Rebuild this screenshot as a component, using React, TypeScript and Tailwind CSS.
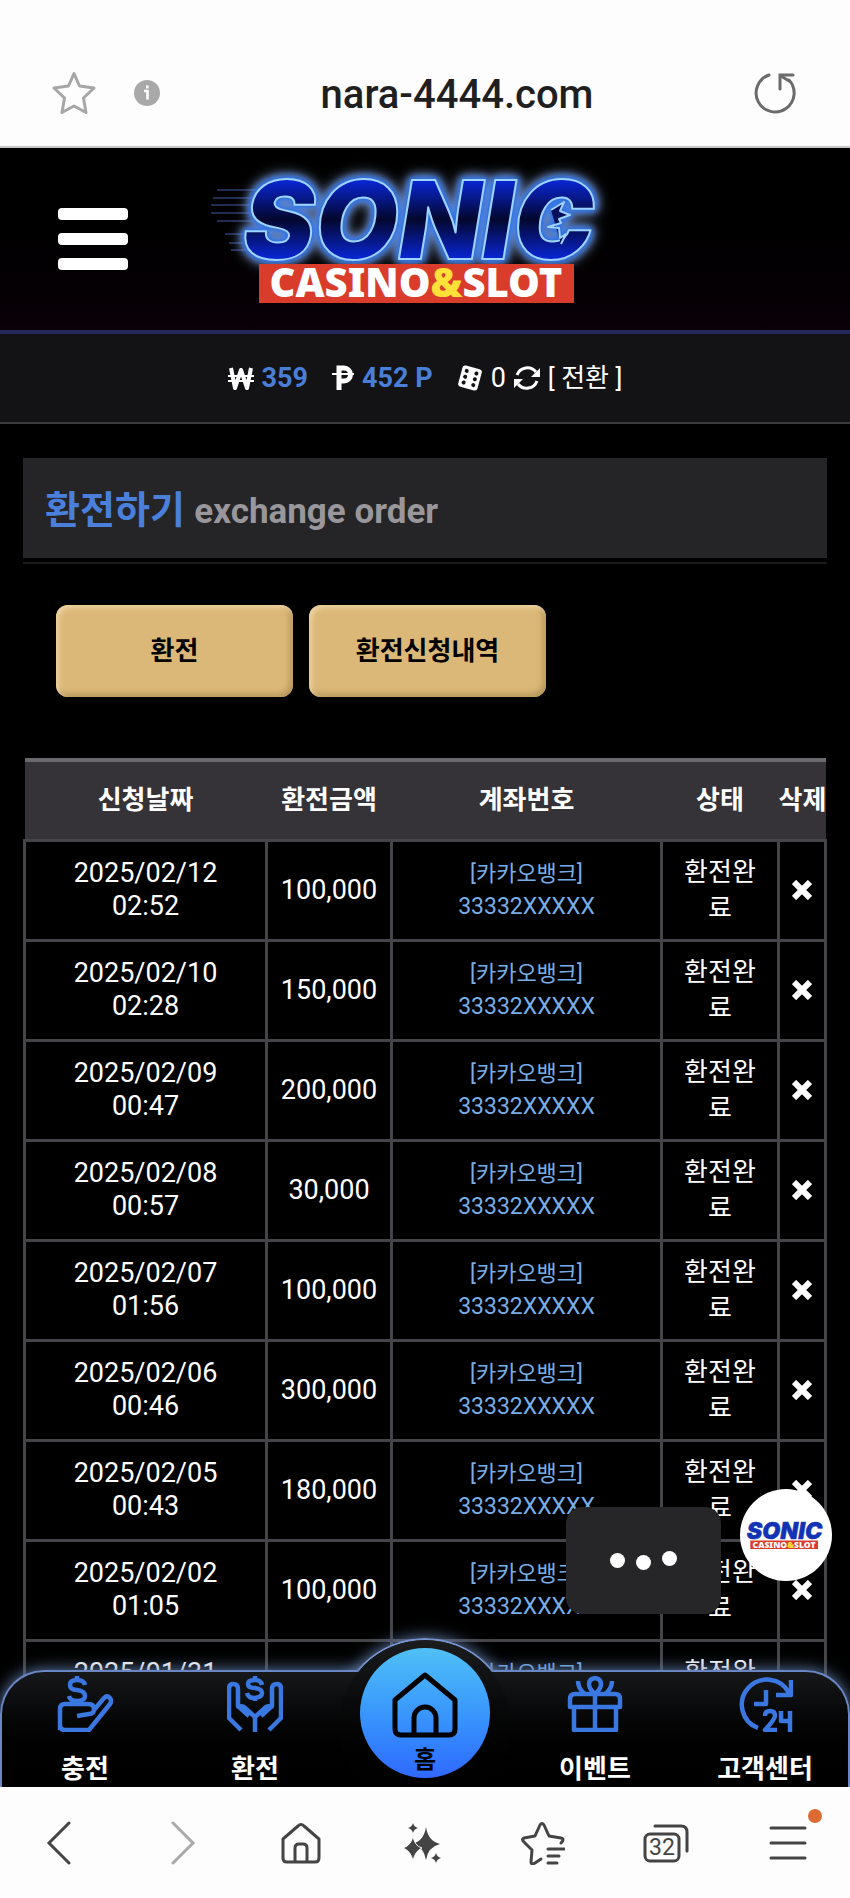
import { FC, ReactNode } from 'react';

type Order = {
	date: string;
	time: string;
	amount: string;
};

const orders: Order[] = [
	{ date: '2025/02/12', time: '02:52', amount: '100,000' },
	{ date: '2025/02/10', time: '02:28', amount: '150,000' },
	{ date: '2025/02/09', time: '00:47', amount: '200,000' },
	{ date: '2025/02/08', time: '00:57', amount: '30,000' },
	{ date: '2025/02/07', time: '01:56', amount: '100,000' },
	{ date: '2025/02/06', time: '00:46', amount: '300,000' },
	{ date: '2025/02/05', time: '00:43', amount: '180,000' },
	{ date: '2025/02/02', time: '01:05', amount: '100,000' },
	{ date: '2025/01/31', time: '00:52', amount: '' },
];

const Logo: FC<{ className: string; small?: boolean }> = ({ className, small }) => (
	<svg viewBox="0 0 400 150" className={`overflow-visible ${className}`} role="img" aria-label="SONIC CASINO & SLOT">
		{!small && (
			<>
				<defs>
					<linearGradient id="sonicFill" x1="0" y1="0" x2="0" y2="1">
						<stop offset="0.15" stopColor="#0a2bf0" />
						<stop offset="0.5" stopColor="#03072e" />
						<stop offset="0.85" stopColor="#0a2bf0" />
					</linearGradient>
				</defs>
				<path
					d="M-8 26h60M-12 34h60M-14 41h60M-14 49h60M-8 57h40M0 70h30M4 79h30M6 86h40"
					stroke="#3a4c8c"
					strokeWidth="1.5"
					opacity="0.8"
				/>
			</>
		)}
		<g
			className={
				small
					? ''
					: '[filter:drop-shadow(0_0_1px_#2c6fe0)_drop-shadow(0_0_3px_#2c6fe0)_drop-shadow(0_0_3px_#3a78e8)_drop-shadow(0_0_6px_#8fa8d8)]'
			}
			fill={small ? '#1233b4' : 'url(#sonicFill)'}
			stroke={small ? '#1233b4' : '#9ed4ff'}
			strokeWidth="2"
			strokeLinejoin="round"
		>
			<text
				x="18"
				y="95"
				fontFamily="Inter, 'Liberation Sans', sans-serif"
				fontWeight="900"
				fontStyle="italic"
				fontSize="108"
			>
				SONIC
			</text>
			{/* quills on the inside of the C */}
			{!small && <path d="M326 46l13-8-4 9 10 4-11 4 2 4-13 4 11 1 1 10 6-4-5 10" fill="#060f5c" />}
		</g>
		<path d="M34 100h315v39H34z" fill="#d93c2b" />
		<text
			x="191"
			y="133"
			textAnchor="middle"
			fontFamily="'Noto Sans', 'Open Sans', sans-serif"
			fontWeight="900"
			fontSize="40"
			fill="#fff"
		>
			CASINO<tspan fill="#ffe13a">&amp;</tspan>SLOT
		</text>
	</svg>
);

const BrowserBar = () => (
	<header className="flex h-[148px] shrink-0 items-center border-b-2 border-[#c8c8c8] bg-[#fdfdfd] px-[52px] pt-10">
		<button aria-label="Bookmark">
			<svg viewBox="0 0 44 44" className="size-11" fill="none" stroke="#a6a6a6" strokeWidth="3" strokeLinejoin="round">
				<path d="M22 2.500l5.500 12.500 14.500 2-10.500 10 2.500 14.500-12-6.500-12 6.500 2.500-14.500L2 17l14.500-2z" />
			</svg>
		</button>
		<button aria-label="Site info" className="ml-[38px]">
			<svg viewBox="0 0 26 26" className="size-[26px]">
				<circle cx="13" cy="13" r="13" fill="#a9a9a9" />
				<path d="M10 11h3.500v8.500M13.300 5.500v3" stroke="#fff" strokeWidth="2.600" fill="none" />
			</svg>
		</button>
		<span className="flex-1 pt-1 text-center text-[40px] font-medium leading-none text-[#1f1f1f]">nara-4444.com</span>
		<button aria-label="Reload">
			<svg viewBox="0 0 44 44" className="size-11" fill="none" stroke="#6b6b6b" strokeWidth="3" strokeLinecap="round">
				<path d="M15 4A19 19 0 1 0 35 9" />
				<path d="M26 18V4h13" />
				<path d="M27 5l8 5" />
			</svg>
		</button>
	</header>
);

const SiteHeader = () => (
	<div className="grid h-[186px] shrink-0 grid-cols-[1fr_auto_1fr] items-center border-b-4 border-[#24285c] bg-linear-to-b from-black to-[#0a0008] px-[58px]">
		<button aria-label="Menu" className="flex w-[70px] flex-col gap-[13px]">
			<span className="h-3 rounded-sm bg-white" />
			<span className="h-3 rounded-sm bg-white" />
			<span className="h-3 rounded-sm bg-white" />
		</button>
		<a href="#home">
			<Logo className="h-[150px] w-[400px]" />
		</a>
	</div>
);

const Balance = () => (
	<div className="flex h-[90px] shrink-0 items-center justify-center border-b-2 border-[#3c3c3e] bg-[#131215] text-[27px] text-white">
		<svg viewBox="0 0 26 24" className="mr-2 h-6 w-[26px]" fill="none" stroke="#fff">
			<path d="M3 2l4 20 6-18 6 18 4-20" strokeWidth="4" strokeLinejoin="round" />
			<path d="M0 10h26M0 15h26" strokeWidth="2" />
		</svg>
		<b className="font-bold text-[#4a7fd8]">359</b>
		<svg viewBox="0 0 22 26" className="mr-2 ml-6 h-[26px] w-[22px]" fill="none" stroke="#fff">
			<path d="M7 25V3h5a6 6 0 0 1 0 13H7" strokeWidth="5" />
			<path d="M0 9h22" strokeWidth="2" />
		</svg>
		<b className="font-bold text-[#4a7fd8]">452 P</b>
		<svg viewBox="0 0 26 26" className="mr-2 ml-6 size-[26px]">
			<g transform="rotate(15 13 13)">
				<rect x="3" y="2" width="20" height="22" rx="3" fill="#fff" />
				<g fill="#131215">
					<circle cx="8" cy="7" r="2" />
					<circle cx="8" cy="13" r="2" />
					<circle cx="8" cy="19" r="2" />
					<circle cx="18" cy="7" r="2" />
					<circle cx="18" cy="13" r="2" />
					<circle cx="18" cy="19" r="2" />
				</g>
			</g>
		</svg>
		<span>0</span>
		<svg viewBox="0 0 26 26" className="mx-2 size-[26px]" fill="none" stroke="#fff" strokeWidth="3">
			<path d="M3 10a11 11 0 0 1 19-3M23 16a11 11 0 0 1-19 3" />
			<path d="M26 3v9h-9zM0 23v-9h9z" fill="#fff" stroke="none" />
		</svg>
		<button className="text-[26px]">[ 전환 ]</button>
	</div>
);

const OrderTable = () => (
	<table className="mt-[61px] w-full table-fixed border-collapse text-center text-white">
		<colgroup>
			<col className="w-[242px]" />
			<col className="w-[125px]" />
			<col />
			<col className="w-[117px]" />
			<col className="w-[47px]" />
		</colgroup>
		<thead>
			<tr className="h-20 border-t-4 border-[#6a696d] bg-[#353337] text-[26px]">
				{['신청날짜', '환전금액', '계좌번호', '상태', '삭제'].map((title) => (
					<th key={title} className="whitespace-nowrap p-0 font-bold">
						{title}
					</th>
				))}
			</tr>
		</thead>
		<tbody>
			{orders.map((order) => (
				<tr key={order.date} className="h-[100px] text-[27px] leading-[33px] *:border-3 *:border-[#454448] *:p-0">
					<td>
						{order.date}
						<br />
						{order.time}
					</td>
					<td>{order.amount}</td>
					<td className="text-[23px] text-[#78aee8]">
						<span className="text-[22px]">[카카오뱅크]</span>
						<br />
						33332XXXXX
					</td>
					<td className="text-[26px] leading-9">
						환전완
						<br />료
					</td>
					<td>
						<button aria-label="삭제" className="block w-full">
							<svg viewBox="0 0 20 20" className="mx-auto size-5" stroke="#fff" strokeWidth="6">
								<path d="M2 2l16 16M18 2L2 18" />
							</svg>
						</button>
					</td>
				</tr>
			))}
		</tbody>
	</table>
);

const NavItem: FC<{ label: string; children: ReactNode }> = ({ label, children }) => (
	<a href={`#${label}`} className="flex flex-1 flex-col items-center justify-between pt-[6px] pb-[2px]">
		<svg viewBox="0 0 56 56" className="size-14" fill="none" stroke="#3b77e0" strokeWidth="4.500" strokeLinejoin="round">
			{children}
		</svg>
		<span className="text-[26px] font-bold leading-8 text-white">{label}</span>
	</a>
);

const BottomNav = () => (
	<nav className="absolute inset-x-0 bottom-0 h-[117px]">
		<div className="absolute -top-8 left-1/2 size-[176px] -translate-x-1/2 rounded-full border-2 border-[#7794d0] shadow-[0_0_16px_#6a86b8]" />
		<div className="absolute inset-0 rounded-t-[44px] border-2 border-b-0 border-[#6a86c4] bg-linear-to-b from-[#17181a] to-black shadow-[0_0_16px_#6480b0]" />
		<div className="absolute -top-[30px] left-1/2 h-[147px] w-[172px] -translate-x-1/2 overflow-hidden">
			<div className="size-[172px] rounded-full bg-linear-to-b from-[#1b1c1e] to-black" />
		</div>
		<div className="relative flex h-full">
			<NavItem label="충전">
				<path d="M3 54V33q0-5 5-5h23q6 0 6 5t-5 5l-12 2M37 34l10-12q3-3 6 0 2 3 0 6L32 54H8q-5 0-5-5" />
				<path d="M28 9q-1-5-8-5-7 0-7 5t7 5q8 1 8 6t-8 5q-7 0-8-5M20 0v5M20 24v5" />
			</NavItem>
			<NavItem label="환전">
				<path d="M14 54L2 42V13q0-5 4-5 5 0 5 5v17l11 10M11 33q2-4 6-2l11 10v15M42 54l12-12V13q0-5-4-5-5 0-5 5v17L34 40M45 33q-2-4-6-2L28 41" />
				<path d="M35 9q-1-5-7-5-7 0-7 4t7 4q7 1 7 5t-7 5q-7 0-8-5M28 0v5M28 21v4" />
			</NavItem>
			<a href="#home" className="relative flex flex-1 justify-center">
				<span className="absolute -top-[22px] flex size-[130px] flex-col items-center gap-[6px] rounded-full bg-linear-to-b from-[#50c0f6] to-[#3068ff] pt-6 text-black">
					<svg viewBox="0 0 66 66" className="size-[66px]" fill="none" stroke="#000" strokeWidth="5" strokeLinejoin="round">
						<path d="M3 28L33 3l30 25v29q0 6-6 6H9q-6 0-6-6z" />
						<path d="M22 62V46a11 11 0 0 1 22 0v16" />
					</svg>
					<span className="text-2xl font-bold leading-8">홈</span>
				</span>
			</a>
			<NavItem label="이벤트">
				<path d="M3 31V23q0-5 5-5h40q5 0 5 5v8zM7 31v23h42V31M28 18v36" />
				<path d="M28 18q-6-5-6-10t6-6q6 1 6 6t-6 10M11 5q0 8 7 13M45 5q0 8-7 13" />
			</NavItem>
			<NavItem label="고객센터">
				<path d="M21 52A25 25 0 1 1 52 17M54 4v15H39M29 14v14H17" />
				<path d="M28 40q0-5 5-5t5 5q0 3-10 14h12M44 35v10h11M53 35v21" />
			</NavItem>
		</div>
	</nav>
);

const Toolbar = () => (
	<footer className="flex h-[111px] shrink-0 items-center justify-between bg-[#fdfdfd] pr-10 pl-9">
		<button aria-label="Back">
			<svg viewBox="0 0 44 44" className="size-11" fill="none" stroke="#444" strokeWidth="3" strokeLinecap="round">
				<path d="M33 2L13 22l20 20" />
			</svg>
		</button>
		<button aria-label="Forward">
			<svg viewBox="0 0 44 44" className="size-11" fill="none" stroke="#aaa" strokeWidth="3" strokeLinecap="round">
				<path d="M16 2l20 20-20 20" />
			</svg>
		</button>
		<button aria-label="Home">
			<svg viewBox="0 0 44 44" className="size-11" fill="none" stroke="#444" strokeWidth="3" strokeLinejoin="round">
				<path d="M4 18L19 5q3-3 6 0l15 13v19q0 4-4 4H8q-4 0-4-4zM16 41V27q0-4 4-4h4q4 0 4 4v14" />
			</svg>
		</button>
		<button aria-label="AI">
			<svg viewBox="0 0 44 44" className="size-11" fill="#444">
				<path d="M26 6q2 14 14 17-12 3-14 16-2-13-14-16 12-3 14-17z" />
				<path d="M13 14q1 11 9 13-7 3-9 13-2-10-10-13 9-3 10-13z" stroke="#fdfdfd" />
				<path d="M13 2q1 4 5 5-4 1-5 5-1-4-5-5 4-1 5-5zM36 32q1 4 5 5-4 1-5 5-1-4-5-5 4-1 5-5z" />
			</svg>
		</button>
		<button aria-label="Bookmarks">
			<svg viewBox="0 0 44 44" className="size-11" fill="none" stroke="#444" strokeWidth="3" strokeLinecap="round" strokeLinejoin="round">
				<path d="M40 22q4-4 0-5l-12-2-5-11q-2-3-4 0l-5 11-11 2q-3 1 0 4l8 8-1 12q0 3 4 1l6-4M27 28h16M27 35h11M27 42h9" />
			</svg>
		</button>
		<button aria-label="Tabs" className="text-[#444]">
			<svg viewBox="0 0 46 44" className="h-11 w-[46px]" fill="none" stroke="#444" strokeWidth="3">
				<rect x="2" y="13" width="34" height="27" rx="5" />
				<path d="M12 5h26q6 0 6 6v19" strokeLinecap="round" />
				<text x="19" y="34" textAnchor="middle" fontSize="23" fill="#444" stroke="none">
					32
				</text>
			</svg>
		</button>
		<button aria-label="Menu" className="relative">
			<svg viewBox="0 0 44 44" className="size-11" fill="none" stroke="#444" strokeWidth="3" strokeLinecap="round">
				<path d="M5 7h34M5 22h34M5 37h34" />
			</svg>
			<span className="absolute -top-3 -right-3 size-[14px] rounded-full bg-[#dd6b31]" />
		</button>
	</footer>
);

export default function App() {
	return (
		<div className="flex h-screen flex-col bg-black font-[Roboto,'Noto_Sans_CJK_KR',sans-serif]">
			<BrowserBar />
			<div className="relative flex min-h-0 flex-1 flex-col overflow-hidden">
				<SiteHeader />
				<Balance />
				<main className="px-[23px] pt-[34px]">
					<div className="border-b-2 border-[#1c1b1e] pb-1">
						<h1 className="h-[100px] bg-[#252427] px-[22px] text-[38px] font-bold leading-[104px] text-[#4a80dc]">
							환전하기 <small className="text-[35px] text-[#99979b]">exchange order</small>
						</h1>
					</div>
					<div className="mt-[41px] flex gap-4 px-[33px]">
						{['환전', '환전신청내역'].map((label) => (
							<button
								key={label}
								className="h-[92px] w-[237px] rounded-xl bg-[#dcb878] text-[26px] font-bold text-black shadow-[inset_3px_3px_5px_#ecd2a0,inset_-3px_-3px_6px_#b39458]"
							>
								{label}
							</button>
						))}
					</div>
					<OrderTable />
				</main>
				<div className="absolute right-[129px] bottom-[173px] flex h-[107px] w-[155px] items-center justify-center gap-[11px] rounded-2xl bg-[#262527]">
					<span className="size-[15px] rounded-full bg-white" />
					<span className="mt-1 size-[15px] rounded-full bg-white" />
					<span className="-mt-1 size-[15px] rounded-full bg-white" />
				</div>
				<button className="absolute right-[18px] bottom-[206px] flex size-[92px] items-center justify-center rounded-full bg-white">
					<Logo small className="w-[86px]" />
				</button>
				<BottomNav />
			</div>
			<Toolbar />
		</div>
	);
}
